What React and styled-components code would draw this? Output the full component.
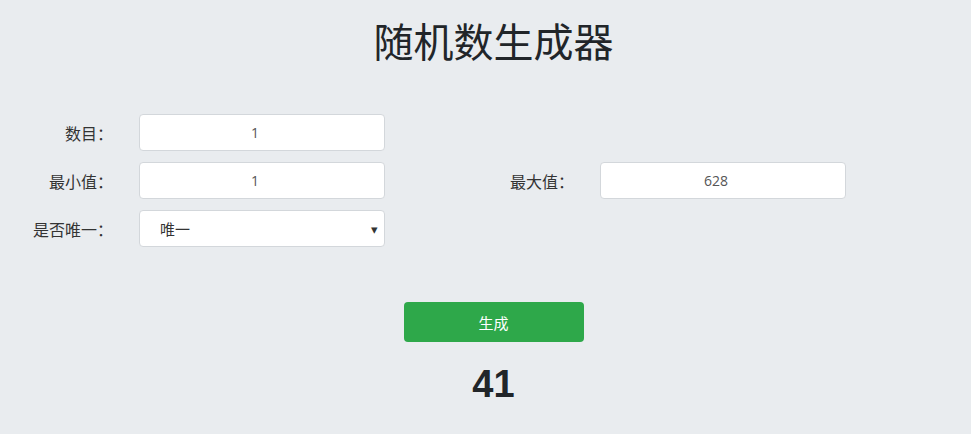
import React, { useState } from 'react';
import styled, { createGlobalStyle } from 'styled-components';

const GlobalStyle = createGlobalStyle`
  html, body {
    margin: 0;
    padding: 0;
    background: #e9ecef;
  }
  body {
    font-family: "Noto Sans CJK SC", "Open Sans", sans-serif;
    color: #212529;
  }
`;

const Page = styled.div`
  min-height: 434px;
  box-sizing: border-box;
  padding-top: 10px;
`;

const Title = styled.h1`
  margin: 0;
  padding-left: 16px;
  text-align: center;
  font-size: 40px;
  font-weight: 400;
  line-height: 60px;
  color: #212529;
`;

const Form = styled.div`
  margin-top: 44px;
  display: grid;
  grid-template-columns: 113px 246px 24px 113px 246px;
  column-gap: 26px;
  row-gap: 11px;
  align-items: center;
  width: max-content;
`;

const Label = styled.label`
  grid-column: ${p => p.col};
  text-align: right;
  font-size: 16px;
  color: #333;
  white-space: nowrap;
`;

const Input = styled.input`
  grid-column: ${p => p.col};
  box-sizing: border-box;
  height: 37px;
  width: 100%;
  border: 1px solid #d3d7db;
  border-radius: 4px;
  background: #fff;
  padding: 0 14px 0 0;
  text-align: center;
  font-family: "Open Sans", "Noto Sans CJK SC", sans-serif;
  font-size: 14px;
  color: #555;
  outline: none;
`;

const SelectWrap = styled.div`
  grid-column: 2;
  position: relative;
  height: 37px;

  &::after {
    content: "▾";
    position: absolute;
    right: 7px;
    top: 9px;
    font-size: 13px;
    color: #333;
    pointer-events: none;
  }
`;

const Select = styled.select`
  appearance: none;
  box-sizing: border-box;
  width: 100%;
  height: 37px;
  border: 1px solid #d3d7db;
  border-radius: 4px;
  background: #fff;
  padding: 0 20px;
  font-family: "Noto Sans CJK SC", sans-serif;
  font-size: 15px;
  color: #333;
  outline: none;
`;

const Actions = styled.div`
  margin-top: 55px;
  padding-left: 16px;
  display: flex;
  flex-direction: column;
  align-items: center;
`;

const Button = styled.button`
  width: 180px;
  height: 40px;
  border: none;
  border-radius: 4px;
  background: #2ea84a;
  color: #fff;
  font-family: "Noto Sans CJK SC", sans-serif;
  font-size: 15px;
  cursor: pointer;
`;

const Result = styled.div`
  margin-top: 17px;
  font-family: "Liberation Sans", Arial, sans-serif;
  font-weight: 700;
  font-size: 38px;
  line-height: 50px;
  color: #212529;
`;

export default function App() {
  const [count, setCount] = useState('1');
  const [min, setMin] = useState('1');
  const [max, setMax] = useState('628');
  const [unique, setUnique] = useState('1');
  const [result, setResult] = useState('41');

  const generate = () => {
    const lo = parseInt(min, 10) || 0;
    const hi = parseInt(max, 10) || 0;
    const n = Math.max(1, parseInt(count, 10) || 1);
    const out = [];
    while (out.length < n) {
      const v = lo + Math.floor(Math.random() * (hi - lo + 1));
      if (unique === '1' && out.includes(v) && out.length < hi - lo + 1) continue;
      out.push(v);
    }
    setResult(out.join(', '));
  };

  return (
    <Page>
      <GlobalStyle />
      <Title>随机数生成器</Title>
      <Form>
        <Label col={1}>数目：</Label>
        <Input col={2} value={count} onChange={e => setCount(e.target.value)} />

        <Label col={1}>最小值：</Label>
        <Input col={2} value={min} onChange={e => setMin(e.target.value)} />
        <Label col={4}>最大值：</Label>
        <Input col={5} value={max} onChange={e => setMax(e.target.value)} />

        <Label col={1}>是否唯一：</Label>
        <SelectWrap>
          <Select value={unique} onChange={e => setUnique(e.target.value)}>
            <option value="1">唯一</option>
            <option value="0">不唯一</option>
          </Select>
        </SelectWrap>
      </Form>
      <Actions>
        <Button onClick={generate}>生成</Button>
        <Result>{result}</Result>
      </Actions>
    </Page>
  );
}
